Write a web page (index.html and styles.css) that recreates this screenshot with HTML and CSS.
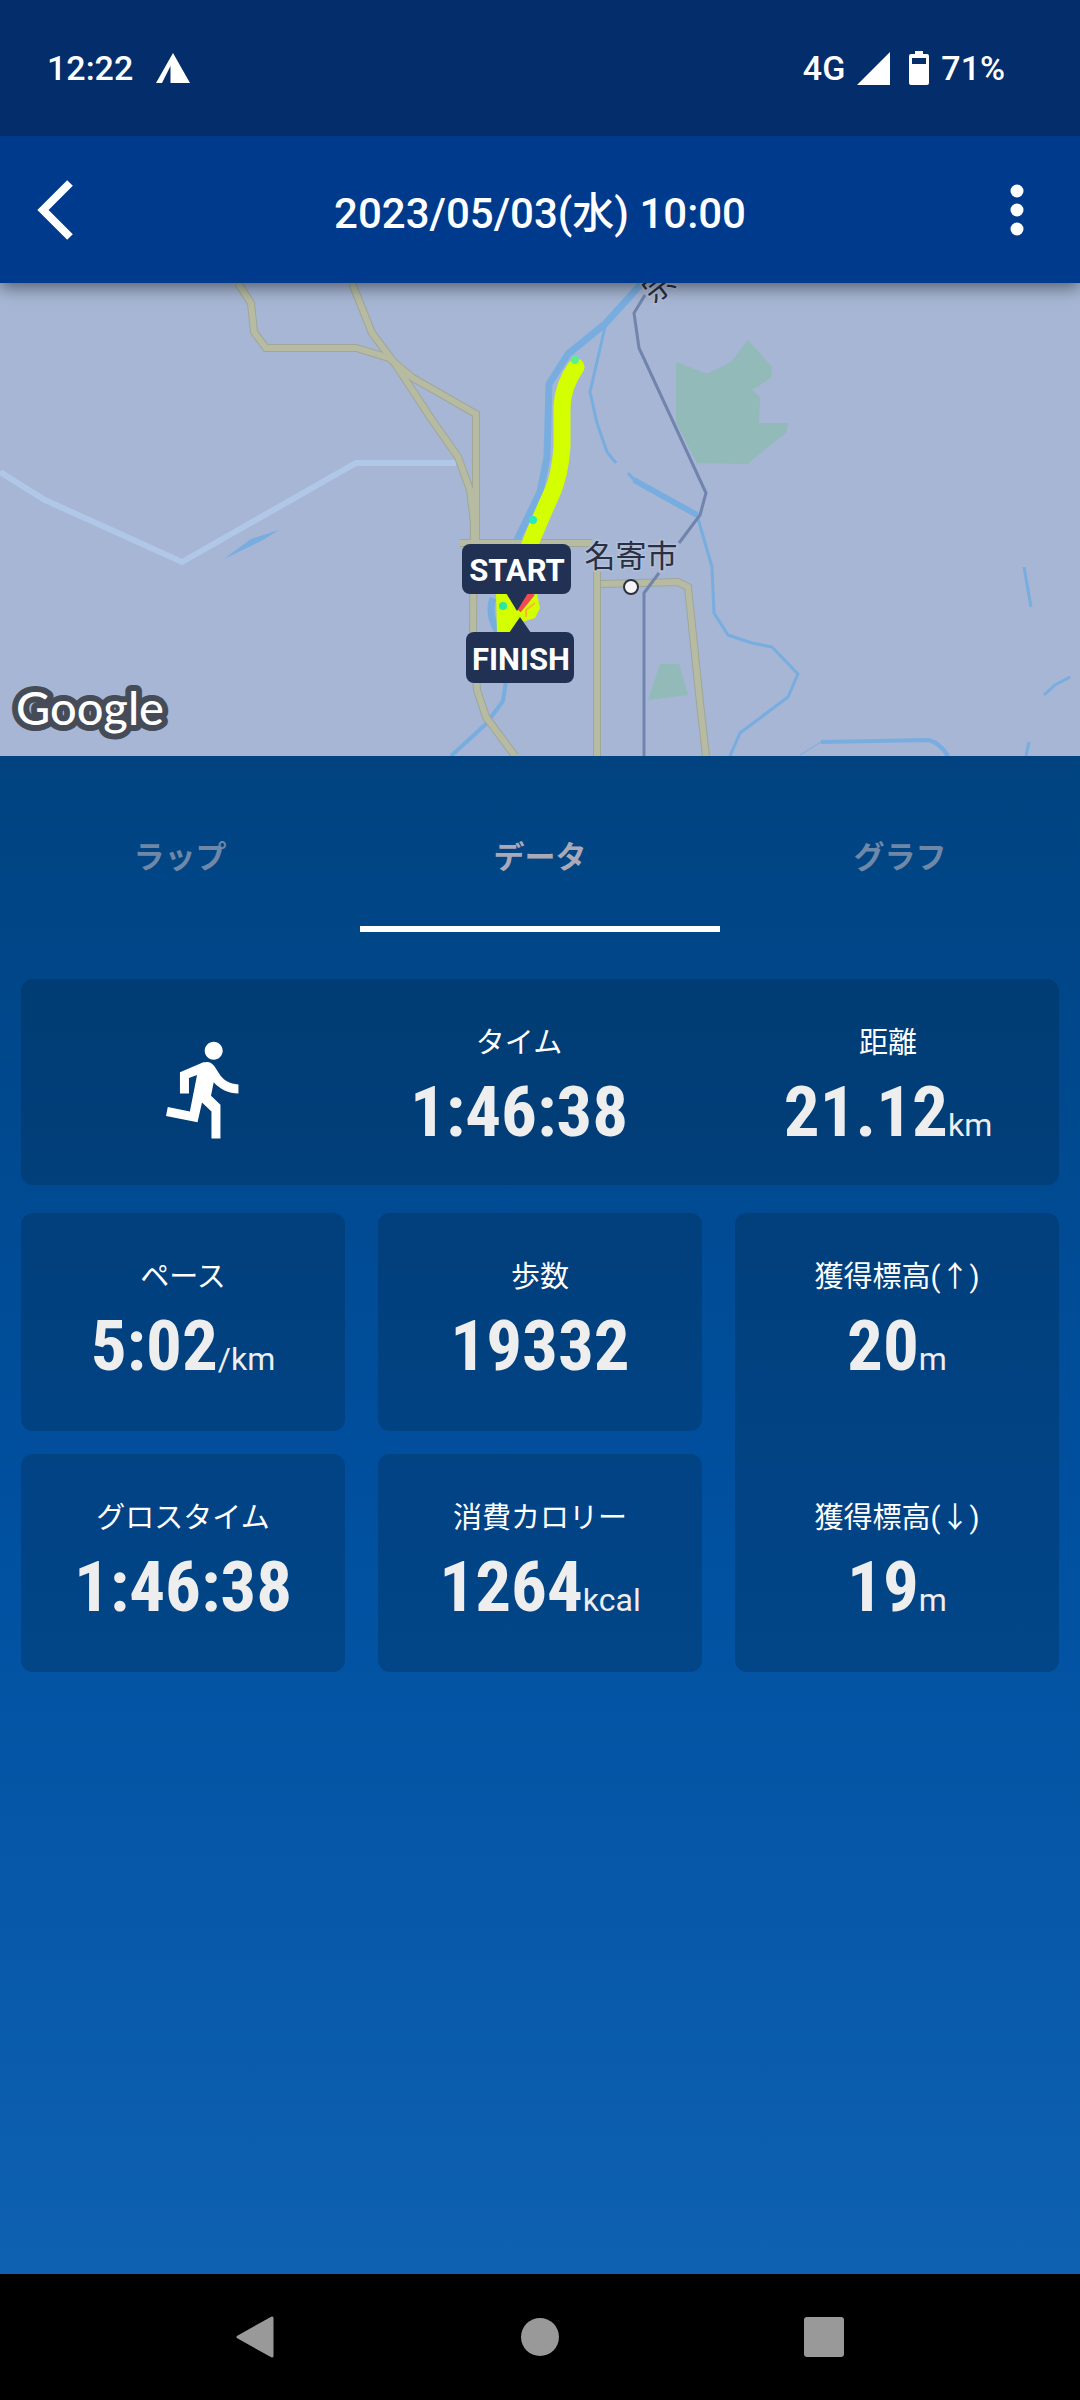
FILE: index.html
```html
<!DOCTYPE html>
<html lang="ja">
<head>
    <meta charset="UTF-8">
    <meta name="viewport" content="width=device-width, initial-scale=1.0">
    <title>2023/05/03(水) 10:00</title>
    <link rel="stylesheet" href="styles.css">
</head>
<body>
    <div class="status-bar">
        <div class="status-group status-left">
            <span>12:22</span>
            <svg class="tent-icon" viewBox="0 0 34 30"><path d="M17 0L34 30H14.500V13L6 30H0z" fill="#fff"/></svg>
        </div>
        <div class="status-group">
            <span>4G</span>
            <svg class="signal-icon" viewBox="0 0 33 33"><path d="M33 0V33H0z" fill="#fff"/></svg>
            <svg class="battery-icon" viewBox="0 0 20 34"><path fill="#fff" fill-rule="evenodd" d="M6 0h8v3h4q2 0 2 2v27q0 2-2 2H2q-2 0-2-2V5q0-2 2-2h4zM3 7v6h14V7z"/></svg>
            <span>71%</span>
        </div>
    </div>

    <header class="header">
        <button class="icon-button" aria-label="戻る">
            <svg width="38" height="60" viewBox="0 0 38 60"><path d="M34 3L7 30l27 27" fill="none" stroke="#fff" stroke-width="8"/></svg>
        </button>
        <h1>2023/05/03(水) 10:00</h1>
        <button class="icon-button" aria-label="メニュー">
            <svg width="14" height="52" viewBox="0 0 14 52" fill="#fff"><circle cx="7" cy="7" r="6.500"/><circle cx="7" cy="26" r="6.500"/><circle cx="7" cy="45" r="6.500"/></svg>
        </button>
    </header>

    <div class="map">
        <svg viewBox="0 0 1080 473" preserveAspectRatio="xMidYMid slice">
            <!-- parks -->
            <g fill="#91bab8">
                <path d="M676 79l31 12 24-12 17-22 24 27-1 11-19 12 8 7-1 26h29l-2 10-39 31-50-1-21-41z"/>
                <path d="M660 381h19l9 31-40 5z"/>
            </g>
            <!-- rivers -->
            <g fill="none" stroke="#78ade0" stroke-width="4" stroke-linejoin="round">
                <path d="M642 0L605 41l-37 30-19 30-2 73-7 35-24 50" stroke-width="7"/>
                <path d="M605 44l-15 65 7 31 10 29 9 11" stroke-width="3"/>
                <path d="M634 197l63 35" stroke-width="6"/>
                <path d="M628 190l8 9 61 33 15 52 2 46 14 22 24 8 20 4 26 27-10 23-48 36-10 23" stroke-width="3"/>
                <path d="M821 459l108-2q12 4 19 16"/>
                <path d="M800 472l21-13" stroke-width="1"/>
                <path d="M1024 284l7 40M1044 412l11-10 15-8M1029 459l-3 14" stroke-width="3"/>
                <path d="M493 315q-6 17 6 36" stroke-width="7"/>
                <path d="M506 398l-3 20-17 23-35 32"/>
            </g>
            <path d="M224 276l27-20 28-9-16 10z" fill="#78ade0"/>
            <path d="M0 189l45 28 137 62 174-99h100" fill="none" stroke="#b1c7e8" stroke-width="6"/>
            <!-- roads -->
            <g fill="none" stroke="#9fa795" stroke-width="8">
                <path d="M238 0l13 20 3 29 12 16h90l33 10 24 20 63 36v128"/>
                <path d="M352 0l20 50 24 32 34 52 28 40 12 33 4 33-1 107 4 60 9 27 29 39"/>
                <path d="M460 260h132M597 289v184M601 301l77-2 10 5 12 116 6 53"/>
            </g>
            <g fill="none" stroke="#b6bba2" stroke-width="6">
                <path d="M238 0l13 20 3 29 12 16h90l33 10 24 20 63 36v128"/>
                <path d="M352 0l20 50 24 32 34 52 28 40 12 33 4 33-1 107 4 60 9 27 29 39"/>
                <path d="M460 260h132M597 289v184M601 301l77-2 10 5 12 116 6 53"/>
            </g>
            <!-- railway -->
            <path d="M645 12l-11 18 5 35 67 145-6 22-21 28M659 290l-15 20v163" fill="none" stroke="#7184ad" stroke-width="3"/>
            <text class="map-label" transform="translate(659 3) rotate(-38)" text-anchor="middle" y="11">宗</text>
            <text class="map-label" x="631" y="284" text-anchor="middle">名寄市</text>
            <circle cx="631" cy="304" r="7" fill="#f5f5f5" stroke="#2b3040" stroke-width="2"/>
            <!-- course -->
            <path d="M576 84q-13 18-14 40 0 20 0 40-2 28-10 46-8 17-22 51" fill="none" stroke="#d4ff00" stroke-width="17" stroke-linecap="round"/>
            <circle cx="575" cy="77" r="4" fill="#5cf08c"/>
            <circle cx="533" cy="237" r="4" fill="#28e8c0"/>
            <path d="M496 309h17l4 17 9-12 11-3 3 14-5 10-13 4-10 12h-15z" fill="#d4ff00"/>
            <circle cx="503" cy="323" r="4" fill="#28e8a0"/>
            <path d="M518 327l14-17" stroke="#f04c50" stroke-width="7"/>
            <path d="M526 334v-7l9-7" fill="none" stroke="#ffb52e" stroke-width="2"/>
            <g fill="#203154">
                <rect x="462" y="261" width="109" height="50" rx="8"/>
                <path d="M506 310h22l-11 18z"/>
                <rect x="466" y="349" width="108" height="51" rx="8"/>
                <path d="M509 350l11-16 11 16z"/>
            </g>
            <text class="marker-text" x="517" y="298" text-anchor="middle">START</text>
            <text class="marker-text" x="521" y="387" text-anchor="middle">FINISH</text>
            <text class="google-text" x="16" y="442">Google</text>
        </svg>
    </div>

    <main class="content">
        <nav class="tabs">
            <button class="tab">ラップ</button>
            <button class="tab active">データ</button>
            <button class="tab">グラフ</button>
        </nav>

        <section class="card summary">
            <svg class="run-icon" viewBox="0 0 24 24"><path fill="#fff" d="M13.490 5.480c1.100 0 2-.9 2-2s-.9-2-2-2-2 .9-2 2 .9 2 2 2zm-3.600 13.900l1-4.400 2.100 2v6h2v-7.500l-2.100-2 .6-3c1.300 1.500 3.300 2.500 5.500 2.500v-2c-1.900 0-3.500-1-4.300-2.400l-1-1.600c-.4-.6-1-1-1.700-1-.3 0-.5.1-.8.1l-5.200 2.200v4.700h2v-3.400l1.800-.7-1.600 8.100-4.900-1-.4 2 7 1.400z"/></svg>
            <div class="item">
                <div class="label">タイム</div>
                <div class="value">1:46:38</div>
            </div>
            <div class="item">
                <div class="label">距離</div>
                <div class="value">21.12<span class="unit">km</span></div>
            </div>
        </section>

        <section class="stats">
            <div class="card item">
                <div class="label">ペース</div>
                <div class="value">5:02<span class="unit">/km</span></div>
            </div>
            <div class="card item">
                <div class="label">歩数</div>
                <div class="value">19332</div>
            </div>
            <div class="card elevation">
                <div class="item">
                    <div class="label">獲得標高(↑)</div>
                    <div class="value">20<span class="unit">m</span></div>
                </div>
                <div class="item">
                    <div class="label">獲得標高(↓)</div>
                    <div class="value">19<span class="unit">m</span></div>
                </div>
            </div>
            <div class="card item">
                <div class="label">グロスタイム</div>
                <div class="value">1:46:38</div>
            </div>
            <div class="card item">
                <div class="label">消費カロリー</div>
                <div class="value">1264<span class="unit">kcal</span></div>
            </div>
        </section>
    </main>

    <footer class="nav-bar">
        <button class="nav-button" aria-label="戻る">
            <svg viewBox="0 0 42 42"><path d="M37 2v38L3 21z" fill="#999" stroke="#999" stroke-width="3" stroke-linejoin="round"/></svg>
        </button>
        <button class="nav-button" aria-label="ホーム">
            <svg viewBox="0 0 42 42"><circle cx="21" cy="21" r="19" fill="#999"/></svg>
        </button>
        <button class="nav-button" aria-label="履歴">
            <svg viewBox="0 0 42 42"><rect x="1" y="1" width="40" height="40" rx="3" fill="#999"/></svg>
        </button>
    </footer>
</body>
</html>
```
FILE: styles.css
```css
* {
    box-sizing: border-box;
}
body {
    display: flex;
    flex-direction: column;
    min-height: 100vh;
    margin: 0;
    font-family: Roboto, "Noto Sans CJK JP", sans-serif;
    color: #fff;
    background-color: #000;
}
button {
    padding: 0;
    border: none;
    background: none;
    color: inherit;
    font-family: inherit;
    cursor: pointer;
}
svg {
    display: block;
}

/* Status bar */
.status-bar {
    position: relative;
    z-index: 2;
    display: flex;
    justify-content: space-between;
    align-items: center;
    height: 136px;
    padding: 0 75px 0 47px;
    background-color: #032d6b;
    font-size: 34px;
    font-weight: 500;
}
.status-group {
    display: flex;
    align-items: center;
    gap: 12px;
}
.status-left {
    gap: 23px;
}
.tent-icon {
    width: 34px;
    height: 30px;
}
.signal-icon {
    width: 33px;
    height: 33px;
}
.battery-icon {
    width: 20px;
    height: 34px;
    margin-left: 7px;
}

/* Header */
.header {
    position: relative;
    z-index: 1;
    display: flex;
    justify-content: space-between;
    align-items: center;
    height: 147px;
    padding: 0 36px;
    background-color: #003a8c;
    box-shadow: 0 4px 16px rgba(0, 0, 0, 0.5);
}
.header h1 {
    margin: 0;
    font-size: 42px;
    font-weight: 500;
}
.icon-button {
    display: flex;
    justify-content: flex-start;
    width: 56px;
}
.icon-button:last-child {
    justify-content: flex-end;
    padding-right: 20px;
}

/* Map */
.map {
    background-color: #a6b6d4;
}
.map svg {
    width: 100%;
}
.map-label {
    font-size: 31px;
    fill: #2b3040;
    stroke: #b0bfda;
    stroke-width: 3px;
    paint-order: stroke;
}
.marker-text {
    font-size: 31px;
    font-weight: 700;
    fill: #fff;
}
.google-text {
    font-family: Lato, sans-serif;
    font-size: 47px;
    font-weight: 500;
    fill: #fff;
    stroke: #454b57;
    stroke-width: 12px;
    stroke-linejoin: round;
    paint-order: stroke;
}

/* Tabs */
.content {
    flex: 1;
    background: linear-gradient(#004380, #0050a0 50%, #0e60b0);
}
.tabs {
    display: flex;
}
.tab {
    flex: 1;
    padding: 82px 0 48px;
    border-bottom: 6px solid transparent;
    font-size: 31px;
    font-weight: 700;
    line-height: 40px;
    color: #7088a8;
}
.tab.active {
    border-color: #fff;
    color: #a9a9b8;
}

/* Cards */
.card {
    border-radius: 12px;
    background-color: rgba(6, 30, 50, 0.24);
}
.summary {
    display: grid;
    grid-template-columns: 300fr 396fr 342fr;
    height: 206px;
    margin: 47px 21px 28px;
}
.run-icon {
    width: 108px;
    margin: 56px 0 0 132px;
}
.item {
    padding-top: 42px;
    text-align: center;
}
.label {
    font-size: 29px;
    line-height: 44px;
}
.value {
    margin-top: 5px;
    font-family: "Roboto Condensed", Roboto, sans-serif;
    font-size: 71px;
    font-weight: 700;
    line-height: 84px;
    color: #eee;
}
.unit {
    font-family: Roboto, sans-serif;
    font-size: 32px;
    font-weight: 400;
}
.stats {
    display: grid;
    grid-template-columns: repeat(3, 1fr);
    grid-auto-rows: 218px;
    gap: 23px 33px;
    margin: 0 21px;
}
.elevation {
    display: grid;
    grid-row: span 2;
    grid-template-rows: 1fr 1fr;
    gap: 23px;
}

/* Navigation bar */
.nav-bar {
    display: flex;
    justify-content: space-between;
    align-items: center;
    height: 126px;
    padding: 0 235px;
    background-color: #000;
}
.nav-button {
    width: 42px;
}
```
